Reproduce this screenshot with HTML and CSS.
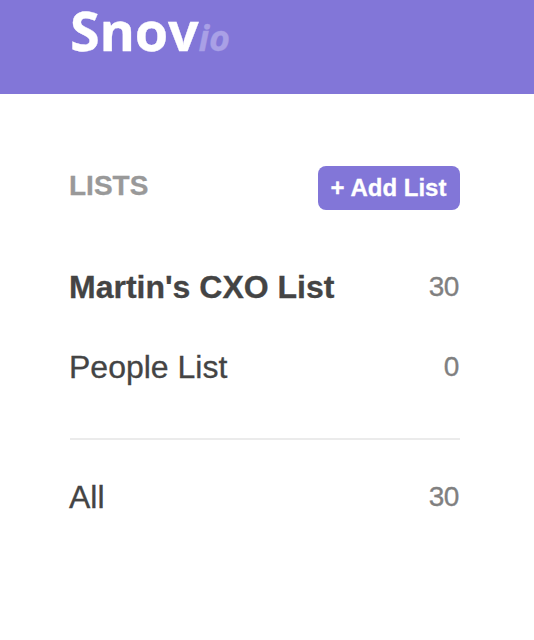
FILE: index.html
```html
<!DOCTYPE html>
<html lang="en">
<head>
  <meta charset="UTF-8">
  <meta name="viewport" content="width=device-width, initial-scale=1.0">
  <title>Snovio - Lists</title>
  <link rel="stylesheet" href="styles.css">
</head>
<body>

<header class="header">
  <a class="logo">Snov<span class="logo-io">io</span></a>
</header>

<main class="lists">
  <div class="lists-head">
    <h2>LISTS</h2>
    <button class="btn">+ Add List</button>
  </div>
  <ul class="list">
    <li class="active"><span class="name">Martin's CXO List</span><span class="count">30</span></li>
    <li><span class="name">People List</span><span class="count">0</span></li>
  </ul>
  <ul class="list list-all">
    <li><span class="name">All</span><span class="count">30</span></li>
  </ul>
</main>

</body>
</html>
```

FILE: styles.css
```css
* {
  box-sizing: border-box;
}
body {
  margin: 0;
  background: #fff;
  color: #444;
  font-family: "Liberation Sans", Arial, sans-serif;
  -webkit-text-stroke: 0.3px;
}
.header {
  height: 94px;
  padding: 0 70px;
  background: #8276d8;
}
.logo {
  display: block;
  color: #fff;
  font-family: "Open Sans", sans-serif;
  font-size: 54px;
  font-weight: 700;
  letter-spacing: -0.2px;
  line-height: 61px;
}
.logo-io {
  color: #a9a0e6;
  font-size: 36px;
  font-style: italic;
}
.lists {
  padding: 72px 74px 0 70px;
}
.lists-head {
  display: flex;
  justify-content: space-between;
  height: 44px;
  margin-bottom: 37px;
}
h2 {
  margin: 0 0 0 -1px;
  color: #999;
  font-size: 28px;
  line-height: 40px;
}
.btn {
  width: 142px;
  height: 44px;
  padding: 0 1px 0 0;
  background: #8276d8;
  border: none;
  border-radius: 8px;
  color: #fff;
  font-family: inherit;
  font-size: 24px;
  font-weight: bold;
}
.list {
  margin: 0;
  padding: 0;
  list-style: none;
}
.list li {
  display: flex;
  justify-content: space-between;
  height: 80px;
  line-height: 80px;
}
.name {
  margin-left: -1px;
  font-size: 32px;
}
.active .name {
  font-weight: bold;
}
.count {
  margin-right: 1px;
  color: #808080;
  font-size: 28px;
  letter-spacing: -0.4px;
}
.list-all {
  margin-top: 31px;
  padding-top: 17px;
  border-top: 2px solid #ebebeb;
}
```
